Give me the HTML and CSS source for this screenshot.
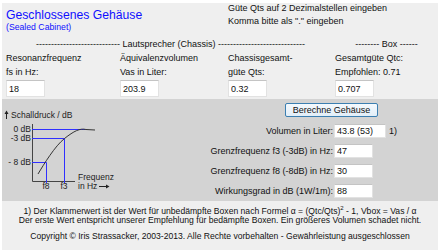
FILE: index.html
```html
<!doctype html>
<html lang="de">
  <head>
    <meta charset="UTF-8" />
    <title>Geschlossenes Gehäuse</title>
    <link rel="stylesheet" href="styles.css">
  </head>
  <body>
    <div class="page">
      <div class="head">
        <div class="title-cell">
          <h1 class="title">Geschlossenes Gehäuse</h1>
          <div class="subtitle">(Sealed Cabinet)</div>
        </div>
        <div class="notes">
          Güte Qts auf 2 Dezimalstellen eingeben<br />
          Komma bitte als "." eingeben
        </div>

        <div class="group group-chassis">---------------------------- Lautsprecher (Chassis) -----------------------------</div>
        <div class="group">-------- Box ------</div>

        <div class="label">Resonanzfrequenz<br />fs in Hz:</div>
        <div class="label">Äquivalenzvolumen<br />Vas in Liter:</div>
        <div class="label">Chassisgesamt-<br />güte Qts:</div>
        <div class="label">Gesamtgüte Qtc:<br />Empfohlen: 0.71</div>

        <input class="field" value="18" />
        <input class="field" value="203.9" />
        <input class="field" value="0.32" />
        <input class="field" value="0.707" />
      </div>

      <div class="calc">
        <svg class="graph" width="150" height="102" viewBox="0 0 150 102">
          <g transform="translate(-2,-99)">
            <path d="M6.5 119 V112" stroke="#222" stroke-width="1" />
            <path d="M4.5 114 L6.5 110.5 L8.5 114 Z" fill="#222" />
            <text x="11" y="118" class="g-text">Schalldruck / dB</text>

            <path d="M32.5 124 V181.5 H75" stroke="#444" fill="none" />

            <path d="M32 129.5 H85 M32 138.5 H64.5 V183 M32 162.5 H46.5 V183" stroke="#2f2fff" fill="none" />
            <path d="M38 174 C44 164 55 146 64.5 138.5 S80 128 86 129.5 L95 130" stroke="#333" fill="none" />

            <text x="31" y="132" class="g-text" text-anchor="end">0 dB</text>
            <text x="31" y="141" class="g-text" text-anchor="end">-3 dB</text>
            <text x="31" y="165" class="g-text" text-anchor="end">- 8 dB</text>
            <text x="46" y="189" class="g-text" text-anchor="middle">f8</text>
            <text x="64" y="189" class="g-text" text-anchor="middle">f3</text>
            <text x="78" y="180" class="g-text">Frequenz</text>
            <text x="78" y="189" class="g-text">in Hz</text>
            <path d="M99 186.5 H108" stroke="#222" />
            <path d="M106 184.5 L109.5 186.5 L106 188.5 Z" fill="#222" />
          </g>
        </svg>

        <div class="results">
          <button class="calc-btn">Berechne Gehäuse</button>
          <div class="result-row">
            <label class="result-label">Volumen in Liter:</label>
            <input class="field field-wide" value="43.8 (53)" />
            <span class="ref">1)</span>
          </div>
          <div class="result-row">
            <label class="result-label">Grenzfrequenz f3 (-3dB) in Hz:</label>
            <input class="field" value="47" />
          </div>
          <div class="result-row">
            <label class="result-label">Grenzfrequenz f8 (-8dB) in Hz:</label>
            <input class="field" value="30" />
          </div>
          <div class="result-row">
            <label class="result-label">Wirkungsgrad in dB (1W/1m):</label>
            <input class="field" value="88" />
          </div>
        </div>
      </div>

      <div class="foot">
        <p class="footnote">
          1) Der Klammerwert ist der Wert für unbedämpfte Boxen nach Formel α = (Qtc/Qts)<sup>2</sup> - 1, Vbox = Vas / α<br />
          Der erste Wert entspricht unserer Empfehlung für bedämpfte Boxen. Ein größeres Volumen schadet nicht.
        </p>
        <p class="copyright">Copyright © Iris Strassacker, 2003-2013. Alle Rechte vorbehalten - Gewährleistung ausgeschlossen</p>
      </div>
    </div>
  </body>
</html>
```

FILE: styles.css
```css
body {
  margin: 0;
  background: #fff;
  font-family: "Liberation Sans", Arial, sans-serif;
  font-size: 9px;
  color: #111;
}

.page {
  margin: 3px 0 0 2px;
  width: 436px;
  height: 247px;
  background: #efefef;
  display: flex;
  flex-direction: column;
}

.head {
  display: grid;
  grid-template-columns: 114px 108px 107px 1fr;
  padding: 0 0 2px 4px;
}

.title-cell {
  grid-column: span 2;
  padding-top: 5px;
}

.title {
  margin: 0;
  font-size: 12.2px;
  font-weight: normal;
  line-height: 14px;
  color: #1010ff;
}

.subtitle {
  font-size: 8.7px;
  line-height: 11px;
  color: #1010ff;
}

.notes {
  grid-column: span 2;
  margin-top: -1px;
  line-height: 12.5px;
}

.group {
  margin-top: 5px;
  text-align: center;
  line-height: 12px;
  white-space: nowrap;
  overflow: hidden;
}

.group-chassis {
  grid-column: span 3;
}

.label {
  margin-top: 2px;
  line-height: 13.5px;
}

.field {
  display: block;
  box-sizing: border-box;
  width: 39px;
  height: 17px;
  margin: 1px 0 0;
  padding: 0 2px;
  border: 1px solid #e2e2e2;
  border-top-color: #c4c4c4;
  background: #fff;
  font: inherit;
  color: #111;
}

.calc {
  display: flex;
  height: 102px;
  background: #d3d3d3;
}

.graph {
  display: block;
  flex: none;
}

.g-text {
  font-family: "Liberation Sans", Arial, sans-serif;
  font-size: 8.5px;
  fill: #222;
}

.results {
  flex: 1;
  padding-top: 4px;
}

.calc-btn {
  display: block;
  margin: 0 0 4px 133px;
  width: 93px;
  height: 14px;
  padding: 0;
  border: 1px solid #3c7fb1;
  border-radius: 2px;
  background: linear-gradient(#f4f9fd, #e2eef8);
  font: inherit;
  color: #111;
}

.result-row {
  display: grid;
  grid-template-columns: 182px 55px auto;
  align-items: center;
  height: 20px;
}

.result-row .field {
  height: 14px;
  margin: 0;
}

.field-wide {
  width: 52px;
}

.result-label {
  text-align: right;
  padding-right: 1px;
}

.foot {
  flex: 1;
  text-align: center;
  font-size: 8.6px;
}

.footnote {
  margin: 0;
  padding-top: 6px;
  line-height: 9px;
}

.footnote sup {
  font-size: 6px;
  line-height: 0;
}

.copyright {
  margin: 7px 0 0;
  line-height: 9px;
}
```
